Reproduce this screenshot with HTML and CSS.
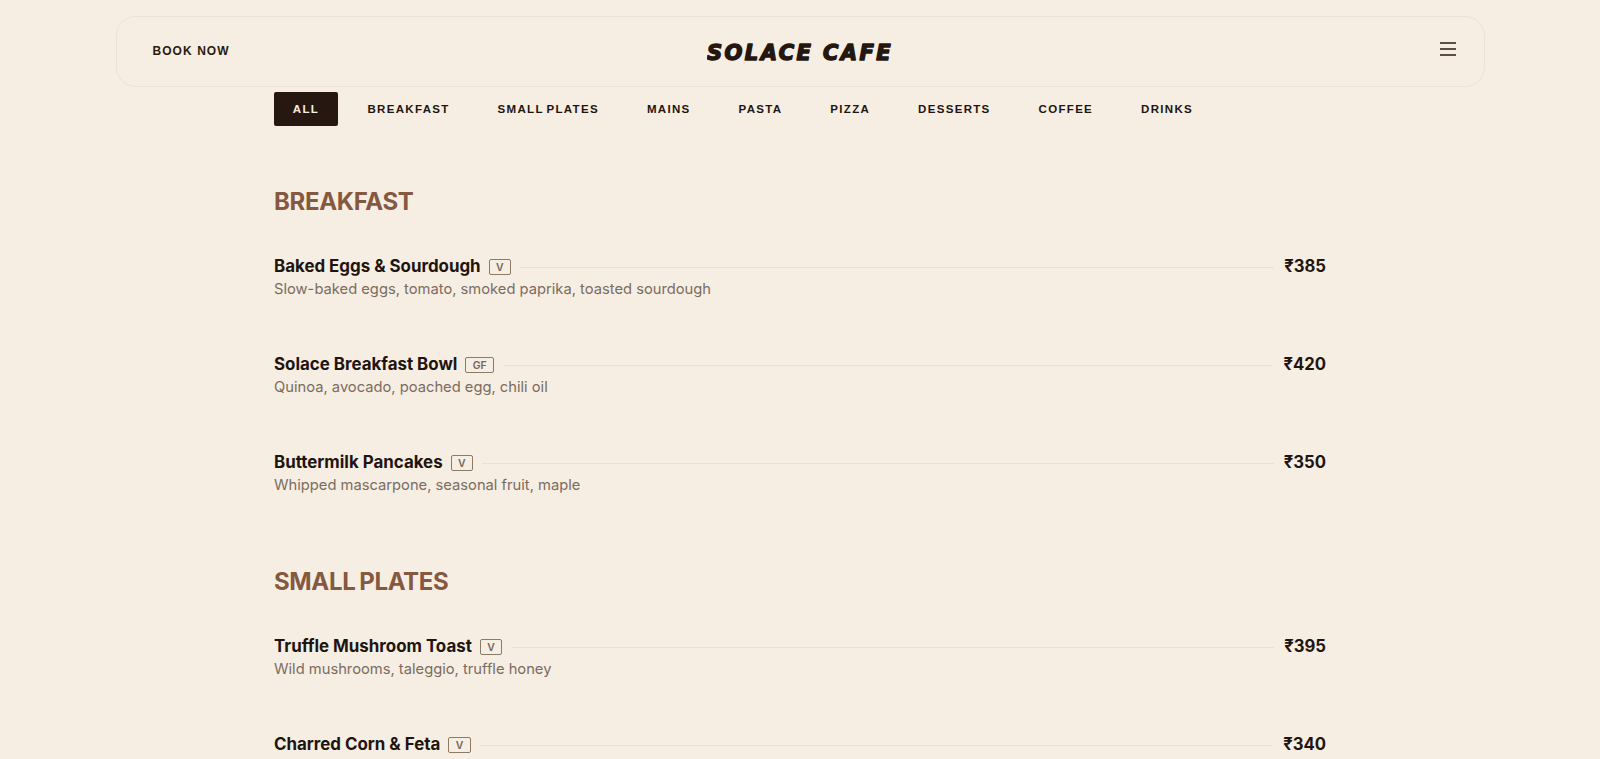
FILE: index.html
```html
<!DOCTYPE html>
<html lang="en">
<head>
<meta charset="utf-8">
<title>Solace Cafe Menu</title>
<link rel="stylesheet" href="styles.css">
</head>
<body>
<header class="topbar">
  <a class="book" href="#">BOOK NOW</a>
  <svg class="logo" width="186" height="30" viewBox="0 0 186 30" role="img" aria-label="Solace Cafe"><text class="logo-text" x="93" y="23" text-anchor="middle">SOLACE CAFE</text></svg>
  <button class="burger" aria-label="Menu">
    <svg width="16" height="14" viewBox="0 0 16 14"><path d="M0 1h16M0 7h16M0 13h16" stroke="#2a1b12" stroke-width="1.5" fill="none"/></svg>
  </button>
</header>
<main class="wrap">
  <nav class="tabs">
    <a class="tab active">ALL</a>
    <a class="tab">BREAKFAST</a>
    <a class="tab">SMALL PLATES</a>
    <a class="tab">MAINS</a>
    <a class="tab">PASTA</a>
    <a class="tab">PIZZA</a>
    <a class="tab">DESSERTS</a>
    <a class="tab">COFFEE</a>
    <a class="tab">DRINKS</a>
  </nav>
  <section class="section">
    <h2>BREAKFAST</h2>
    <article class="item">
      <div class="line"><span class="name">Baked Eggs &amp; Sourdough</span><span class="tag">V</span><span class="rule"></span><span class="price">₹385</span></div>
      <p class="desc">Slow-baked eggs, tomato, smoked paprika, toasted sourdough</p>
    </article>
    <article class="item">
      <div class="line"><span class="name">Solace Breakfast Bowl</span><span class="tag">GF</span><span class="rule"></span><span class="price">₹420</span></div>
      <p class="desc">Quinoa, avocado, poached egg, chili oil</p>
    </article>
    <article class="item">
      <div class="line"><span class="name">Buttermilk Pancakes</span><span class="tag">V</span><span class="rule"></span><span class="price">₹350</span></div>
      <p class="desc">Whipped mascarpone, seasonal fruit, maple</p>
    </article>
  </section>
  <section class="section">
    <h2>SMALL PLATES</h2>
    <article class="item">
      <div class="line"><span class="name">Truffle Mushroom Toast</span><span class="tag">V</span><span class="rule"></span><span class="price">₹395</span></div>
      <p class="desc">Wild mushrooms, taleggio, truffle honey</p>
    </article>
    <article class="item">
      <div class="line"><span class="name">Charred Corn &amp; Feta</span><span class="tag">V</span><span class="rule"></span><span class="price">₹340</span></div>
      <p class="desc">Sweet corn, whipped feta, chili lime</p>
    </article>
  </section>
</main>
</body>
</html>
```
FILE: styles.css
```css
* { box-sizing: border-box; }
html, body { margin: 0; height: 759px; overflow: hidden; }
body { background: #f6eee3; color: #1f1510; font-family: "Inter", sans-serif; padding-top: 16px; }
.topbar {
  width: 1369px; height: 71px; margin: 0 auto;
  border: 1px solid #ece3d6; border-radius: 20px;
  display: grid; grid-template-columns: 1fr auto 1fr; align-items: center;
  padding: 0 36px;
}
.book { font: 700 12px "Liberation Sans", Arial, sans-serif; letter-spacing: 1.06px; color: #2a1b12; text-decoration: none; margin-bottom: 2px; }
.logo { display: block; }
.logo-text {
  font: italic 700 21px "DejaVu Sans", sans-serif; letter-spacing: 2.4px;
  fill: #231710; stroke: #231710; stroke-width: 1.5px; stroke-linejoin: round; stroke-linecap: round;
}
.burger { justify-self: end; background: none; border: 0; padding: 0; display: flex; margin: 0 -8px 6px 0; }
.wrap { width: 1052px; margin: 5px auto 0; }
.tabs { display: flex; align-items: center; height: 34px; }
.tab { font: 700 11.52px "Liberation Sans", Arial, sans-serif; letter-spacing: 1.3px; word-spacing: -1.5px; color: #1f1510; padding: 0 24px; }
.tab.active { background: #261810; color: #f6eee3; border-radius: 2px; height: 34px; width: 64px; display: flex; align-items: center; justify-content: center; padding: 0; margin-right: 5.5px; }
.section { margin-top: 60px; }
.section + .section { margin-top: 18px; }
h2 { margin: 0 0 36px; font-size: 24px; line-height: 32px; font-weight: 700; letter-spacing: -.35px; word-spacing: -1.5px; color: #85593f; }
.item { height: 98px; }
.line { display: flex; align-items: center; height: 26px; }
.name { font-size: 16.9px; font-weight: 650; color: #1f1510; margin-bottom: 2px; }
.tag { margin-left: 8px; height: 16.5px; border: 1px solid #8a7a66; border-radius: 2px; font-size: 10.4px; font-weight: 600; color: #75655a; display: flex; align-items: center; justify-content: center; padding: 0 6.4px; }
.rule { flex: 1; height: 1px; background: #ebe1cf; margin: 0 10px 0 9.5px; }
.price { font-size: 16.7px; font-weight: 650; color: #1f1510; margin-bottom: 2px; }
.desc { margin: -1px 0 0; font-size: 14.72px; line-height: 20px; color: #7a6c60; }
```
